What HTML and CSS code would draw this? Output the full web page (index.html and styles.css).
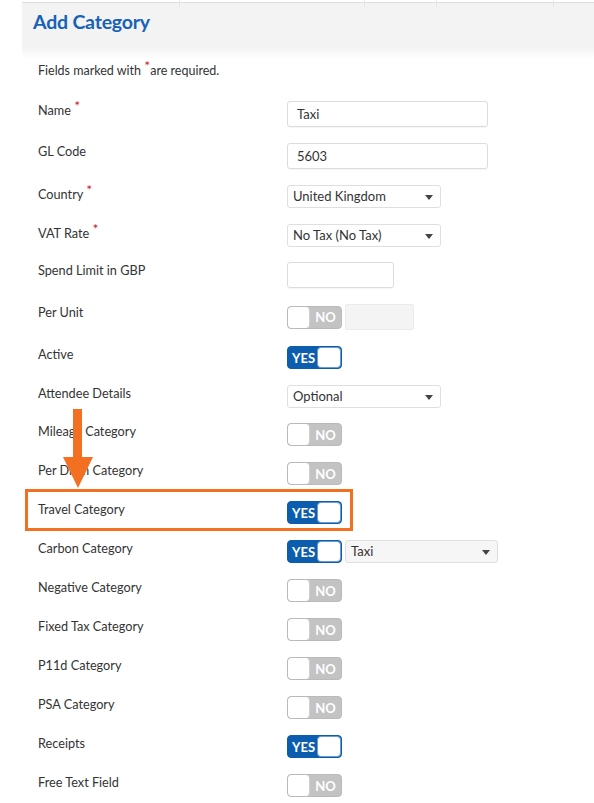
FILE: index.html
```html
<!DOCTYPE html>
<html lang="en">
<head>
    <meta charset="UTF-8">
    <title>Add Category</title>
    <link rel="stylesheet" href="styles.css">
</head>
<body>
<div class="tabs">
    <span class="tab t1"></span>
    <span class="tab t2"></span>
    <span class="tab t3"></span>
    <span class="tab t4"></span>
    <span class="tab t5"></span>
</div>
<div class="header">
    <h1>Add Category</h1>
</div>
<div class="content">
    <p class="note">Fields marked with <span class="req">*</span>are required.</p>

    <div class="form">
        <div class="row">
            <label>Name <span class="req">*</span></label>
            <div class="input wide">Taxi</div>
        </div>
        <div class="row">
            <label>GL Code</label>
            <div class="input wide">5603</div>
        </div>
        <div class="row">
            <label>Country <span class="req">*</span></label>
            <div class="select">United Kingdom<span class="caret"></span></div>
        </div>
        <div class="row tight">
            <label>VAT Rate <span class="req">*</span></label>
            <div class="select">No Tax (No Tax)<span class="caret"></span></div>
        </div>
        <div class="row">
            <label>Spend Limit in GBP</label>
            <div class="input short"></div>
        </div>
        <div class="row">
            <label>Per Unit</label>
            <div class="ctrl">
                <div class="toggle off"><span class="knob"></span><span class="txt">NO</span></div>
                <div class="unit-box"></div>
            </div>
        </div>
        <div class="row">
            <label>Active</label>
            <div class="toggle on"><span class="txt">YES</span><span class="knob"></span></div>
        </div>
        <div class="row tight">
            <label>Attendee Details</label>
            <div class="select">Optional<span class="caret"></span></div>
        </div>
        <div class="row">
            <label>Mileage Category</label>
            <div class="toggle off"><span class="knob"></span><span class="txt">NO</span></div>
        </div>
        <div class="row">
            <label>Per Diem Category</label>
            <div class="toggle off"><span class="knob"></span><span class="txt">NO</span></div>
        </div>
        <div class="row">
            <label>Travel Category</label>
            <div class="toggle on"><span class="txt">YES</span><span class="knob"></span></div>
        </div>
        <div class="row">
            <label>Carbon Category</label>
            <div class="ctrl">
                <div class="toggle on"><span class="txt">YES</span><span class="knob"></span></div>
                <div class="select grey">Taxi<span class="caret"></span></div>
            </div>
        </div>
        <div class="row">
            <label>Negative Category</label>
            <div class="toggle off"><span class="knob"></span><span class="txt">NO</span></div>
        </div>
        <div class="row">
            <label>Fixed Tax Category</label>
            <div class="toggle off"><span class="knob"></span><span class="txt">NO</span></div>
        </div>
        <div class="row">
            <label>P11d Category</label>
            <div class="toggle off"><span class="knob"></span><span class="txt">NO</span></div>
        </div>
        <div class="row">
            <label>PSA Category</label>
            <div class="toggle off"><span class="knob"></span><span class="txt">NO</span></div>
        </div>
        <div class="row">
            <label>Receipts</label>
            <div class="toggle on"><span class="txt">YES</span><span class="knob"></span></div>
        </div>
        <div class="row">
            <label>Free Text Field</label>
            <div class="toggle off"><span class="knob"></span><span class="txt">NO</span></div>
        </div>

        <!-- callout over the travel row -->
        <div class="callout"></div>
        <svg class="arrow" width="32" height="80" viewBox="0 0 32 80">
            <rect x="11" y="0" width="9" height="50" fill="#f37022"/>
            <polygon points="1,48 31,48 16,79" fill="#f37022"/>
        </svg>
    </div>
</div>
</body>
</html>
```

FILE: styles.css
```css
* {
    margin: 0;
    padding: 0;
    box-sizing: border-box;
}
body {
    font-family: Lato, "Open Sans", sans-serif;
    color: #333;
    background: #fff;
}

/* tab strip at the very top */
.tabs {
    display: flex;
    height: 3px;
    margin-left: 22px;
    border-bottom: 1px solid #dedede;
}
.tab {
    height: 7px;
    border-right: 1px solid #e4e4e4;
}
.t1 { width: 158px; }
.t2 { width: 185px; }
.t3 { width: 72px; }
.t4 { width: 117px; }
.t5 { flex: 1; border-right: 0; }

.header {
    margin-left: 22px;
    height: 56px;
    padding: 7px 0 0 11px;
    background: linear-gradient(#f3f3f4 0, #f3f3f4 78%, #fff 100%);
}
.header h1 {
    font-size: 19.5px;
    font-weight: 700;
    color: #1762b5;
    line-height: 24px;
    letter-spacing: -0.2px;
}

.content {
    padding-left: 38px;
}
.note {
    font-size: 12.5px;
    line-height: 16px;
    margin-top: 3px;
}
.req {
    color: #d0202a;
    font-size: 14px;
    position: relative;
    top: -4px;
}

.form {
    position: relative;
    margin-top: 22px;
    display: flex;
    flex-direction: column;
    gap: 16px;
}
.row {
    display: flex;
    align-items: flex-start;
}
.row.tight {
    margin-bottom: -1px;
}
.row label {
    width: 249px;
    font-size: 12.7px;
    line-height: 17px;
    flex-shrink: 0;
}
.ctrl {
    display: flex;
    align-items: center;
    gap: 3px;
}

.input {
    height: 26px;
    border: 1px solid #dcdcdc;
    border-radius: 3px;
    padding-left: 9px;
    font-size: 13px;
    line-height: 24px;
    box-shadow: 0 1px 1px rgba(0, 0, 0, 0.04);
}
.input.wide { width: 201px; }
.input.short { width: 107px; }

.select {
    position: relative;
    width: 154px;
    height: 23px;
    border: 1px solid #dfdfdf;
    border-radius: 3px;
    padding-left: 5px;
    font-size: 13px;
    line-height: 21px;
    background: #fff;
}
.select.grey {
    width: 153px;
    background: #f6f6f6;
}
.caret {
    position: absolute;
    right: 7px;
    top: 9px;
    border-left: 4px solid transparent;
    border-right: 4px solid transparent;
    border-top: 5px solid #444;
}

.unit-box {
    width: 69px;
    height: 26px;
    background: #f4f4f4;
    border: 1px solid #ebebeb;
    border-radius: 2px;
}

/* on/off switches */
.toggle {
    width: 55px;
    height: 23px;
    border-radius: 4px;
    display: flex;
    align-items: center;
    font-size: 13px;
    font-weight: 700;
    color: #fff;
}
.toggle .knob {
    width: 24px;
    height: 23px;
    background: #fff;
    border-radius: 4px;
}
.toggle .txt {
    flex: 1;
    text-align: center;
}
.toggle.off {
    background: #c3c3c3;
    border: 1px solid #bababa;
}
.toggle.off .knob {
    height: 21px;
    width: 22px;
    border-right: 1px solid #d0d0d0;
}
.toggle.on {
    background: #0d5dae;
    border: 1px solid #0d5dae;
}
.toggle.on .knob {
    height: 21px;
    border: 1px solid #6d9ad0;
}
.toggle.on .txt {
    padding-left: 2px;
}

.callout {
    position: absolute;
    left: -13px;
    top: 388px;
    width: 328px;
    height: 42px;
    border: 3px solid #f37022;
}
.arrow {
    position: absolute;
    left: 24px;
    top: 308px;
}
```
